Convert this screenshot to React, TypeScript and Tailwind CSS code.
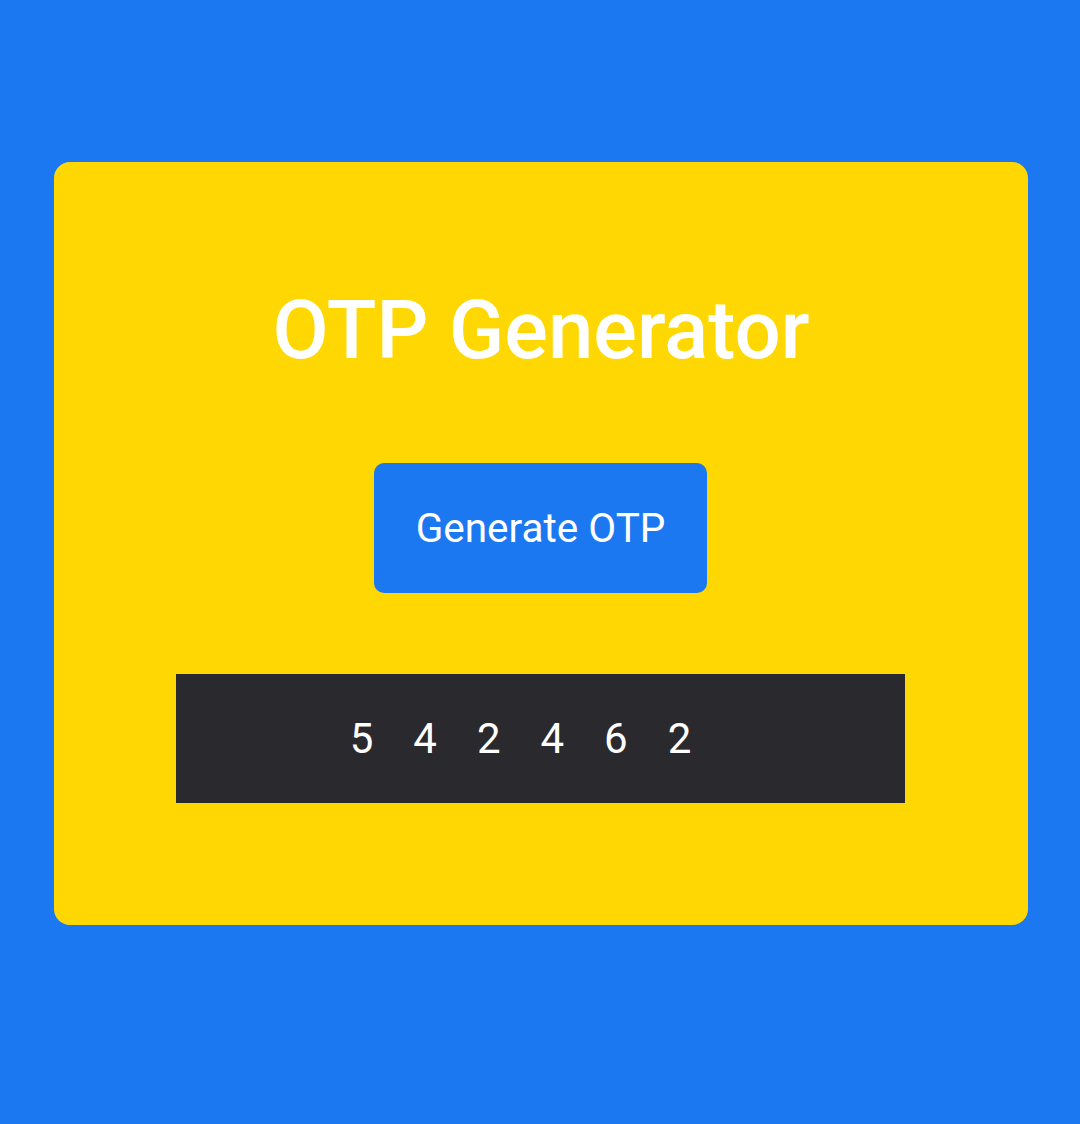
import React from "react";

export default function App() {
  return (
    <div
      className="w-[1080px] h-[1124px] bg-[#1c78f1] pt-[162px] px-[54px]"
      style={{ fontFamily: "Roboto, 'Liberation Sans', sans-serif" }}
    >
      <div className="w-[974px] h-[763px] bg-[#ffd803] rounded-[16px] flex flex-col items-center">
        <h1 className="mt-[169px] text-white text-[81.5px] font-medium leading-none h-0 flex items-center">
          OTP Generator
        </h1>
        <button className="mt-[132px] mr-[1px] w-[333px] h-[130px] rounded-[10px] bg-[#1c78f1] text-white text-[40.5px] leading-none">
          Generate OTP
        </button>
        <div className="mt-[81px] mr-[1px] w-[729px] h-[129px] bg-[#2a292e] flex items-center justify-center">
          <span className="text-white text-[42px] tracking-[40px] leading-none">542462</span>
        </div>
      </div>
    </div>
  );
}
